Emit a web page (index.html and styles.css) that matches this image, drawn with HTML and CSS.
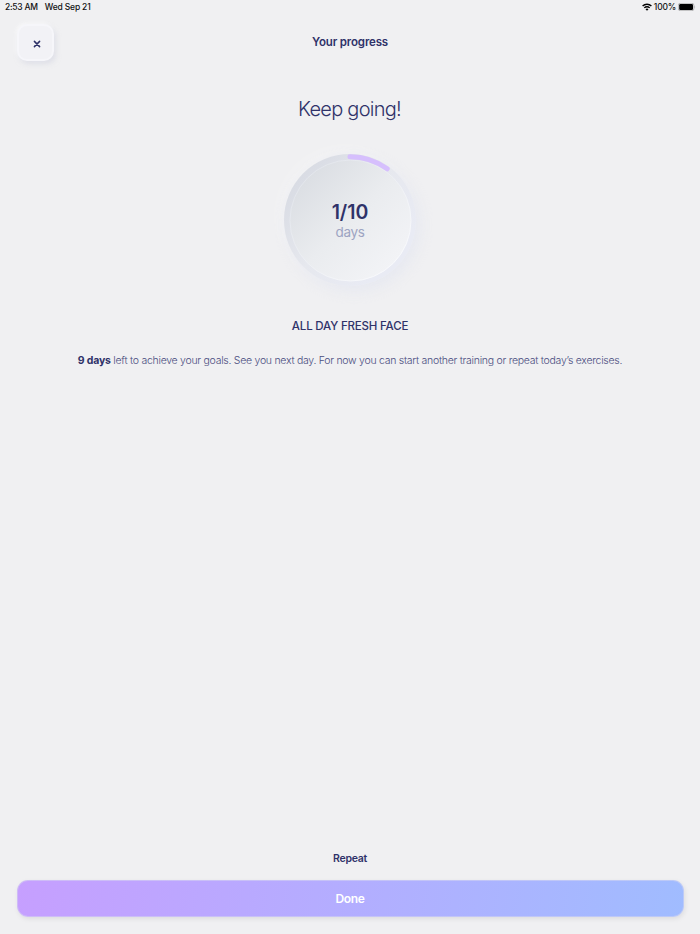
FILE: index.html
```html
<!DOCTYPE html>
<html lang="en">
<head>
    <meta charset="UTF-8">
    <meta name="viewport" content="width=device-width, initial-scale=1.0">
    <title>Your progress</title>
    <link rel="stylesheet" href="styles.css">
</head>
<body>

<div class="status-bar">
    <span class="time">2:53 AM</span>
    <span class="date">Wed Sep 21</span>
    <svg class="wifi" width="10" height="8" viewBox="0 0 10 8">
        <path d="M0.6 3.1 A6.2 6.2 0 0 1 9.4 3.1" fill="none" stroke="#000" stroke-width="1.4"/>
        <path d="M2.3 4.9 A3.8 3.8 0 0 1 7.7 4.9" fill="none" stroke="#000" stroke-width="1.3"/>
        <path d="M5 7.8 L3.5 6.2 A2.2 2.2 0 0 1 6.5 6.2 Z" fill="#000"/>
    </svg>
    <span class="percent">100%</span>
    <svg class="battery" width="18" height="8" viewBox="0 0 18 8">
        <rect x="0.3" y="0.3" width="15.6" height="7.4" rx="2" fill="none" stroke="#000" stroke-opacity="0.4" stroke-width="0.6"/>
        <rect x="1.2" y="1.1" width="13.8" height="5.8" rx="1.2" fill="#000"/>
        <path d="M16.7 2.8 Q17.6 4 16.7 5.2 Z" fill="#000" fill-opacity="0.4"/>
    </svg>
</div>

<header class="header">
    <button class="close-btn" aria-label="Close">
        <svg width="8" height="8" viewBox="0 0 8 8">
            <path d="M1.4 1.4 L6.6 6.6 M6.6 1.4 L1.4 6.6" stroke="#2c2f66" stroke-width="1.5" stroke-linecap="round"/>
        </svg>
    </button>
    <h1 class="title">Your progress</h1>
</header>

<main class="content">
    <h2 class="heading">Keep going!</h2>

    <div class="progress">
        <svg class="ring" width="132" height="132" viewBox="0 0 132 132">
            <defs>
                <linearGradient id="track" x1="0.1" y1="0.2" x2="0.8" y2="0.8">
                    <stop offset="0" stop-color="#d9dce4"/>
                    <stop offset="0.5" stop-color="#e6e8ee"/>
                    <stop offset="1" stop-color="#e9ebf4"/>
                </linearGradient>
                <linearGradient id="disc" x1="0.15" y1="0.15" x2="0.85" y2="0.85">
                    <stop offset="0" stop-color="#dcdfe4"/>
                    <stop offset="0.5" stop-color="#eaecef"/>
                    <stop offset="1" stop-color="#f2f3f6"/>
                </linearGradient>
                <linearGradient id="edge" x1="0.15" y1="0.15" x2="0.85" y2="0.85">
                    <stop offset="0" stop-color="#e3e6ec"/>
                    <stop offset="1" stop-color="#f8f9fc"/>
                </linearGradient>
            </defs>
            <circle cx="66" cy="66" r="66" fill="url(#track)"/>
            <circle cx="66.5" cy="66.5" r="60.5" fill="url(#disc)" stroke="url(#edge)" stroke-width="1"/>
            <path d="M66 2.7 A63.3 63.3 0 0 1 103.2 14.8" fill="none" stroke="#d6bffd" stroke-width="5" stroke-linecap="round"/>
        </svg>
        <div class="progress-text">
            <span class="count">1/10</span>
            <span class="unit">days</span>
        </div>
    </div>

    <h3 class="course">ALL DAY FRESH FACE</h3>
    <p class="message"><b>9 days</b> left to achieve your goals. See you next day. For now you can start another training or repeat today’s exercises.</p>
</main>

<footer class="footer">
    <button class="repeat-btn">Repeat</button>
    <button class="done-btn">Done</button>
</footer>

</body>
</html>
```
FILE: styles.css
```css
* {
    box-sizing: border-box;
}

body {
    display: flex;
    flex-direction: column;
    height: 100vh;
    margin: 0;
    background-color: #f0f0f2;
    color: #2f3269;
    font-family: Inter, "Liberation Sans", sans-serif;
    overflow: hidden;
}

button {
    padding: 0;
    border: none;
    background: none;
    color: inherit;
    font-family: inherit;
    cursor: pointer;
}

h1, h2, h3, p {
    margin: 0;
}

.status-bar {
    display: flex;
    align-items: center;
    height: 14px;
    padding: 0 4px 0 5px;
    color: #111;
    font-size: 8.5px;
    font-weight: 500;
    letter-spacing: -0.2px;
}

.time {
    letter-spacing: -0.25px;
}

.date {
    margin-left: 7px;
    letter-spacing: -0.15px;
}

.wifi {
    margin-left: auto;
}

.percent {
    margin: 0 2px;
}

.header {
    display: grid;
    grid-template-columns: 38px 1fr 38px;
    height: 52px;
    padding: 10px 17px 0;
}

.close-btn {
    display: flex;
    align-items: center;
    justify-content: center;
    width: 37px;
    height: 37px;
    padding: 2px 0 0 2px;
    border: 2px solid #f6f6fa;
    border-radius: 10px;
    background-color: #f2f2f6;
    box-shadow: 2px 3px 5px rgba(205, 207, 222, 0.5), -1px -1px 4px rgba(255, 255, 255, 0.7);
}

.title {
    padding-top: 10px;
    font-size: 11.5px;
    line-height: 16px;
    font-weight: 600;
    letter-spacing: -0.15px;
    text-align: center;
}

.content {
    display: flex;
    flex: 1;
    flex-direction: column;
    align-items: center;
    padding-top: 28px;
}

.heading {
    padding-right: 1px;
    font-size: 20px;
    line-height: 30px;
    font-weight: 300;
    letter-spacing: -0.75px;
}

.progress {
    display: grid;
    width: 132px;
    height: 132px;
    margin-top: 30px;
    border-radius: 50%;
    box-shadow: 4px 5px 14px rgba(220, 223, 240, 0.45), -5px -5px 16px rgba(255, 255, 255, 0.25);
}

.ring,
.progress-text {
    grid-area: 1 / 1;
}

.progress-text {
    display: flex;
    flex-direction: column;
    align-items: center;
    padding-top: 46px;
    z-index: 1;
}

.count {
    font-size: 19.5px;
    line-height: 24px;
    font-weight: 600;
}

.unit {
    color: #9da4c2;
    font-size: 13.5px;
    line-height: 16px;
    letter-spacing: -0.4px;
}

.course {
    margin-top: 32px;
    font-size: 11.5px;
    line-height: 16px;
    font-weight: 500;
    letter-spacing: -0.18px;
}

.message {
    margin-top: 19px;
    color: #4a4d80;
    font-size: 10.5px;
    line-height: 16px;
    font-weight: 300;
    letter-spacing: -0.27px;
    white-space: nowrap;
}

.message b {
    color: #2f3269;
    font-weight: 700;
    letter-spacing: -0.2px;
}

.footer {
    display: flex;
    flex-direction: column;
    align-items: center;
    padding: 0 16.5px 17px;
}

.repeat-btn {
    margin-bottom: 13px;
    font-size: 10.5px;
    line-height: 16px;
    font-weight: 600;
    letter-spacing: -0.25px;
}

.done-btn {
    width: 100%;
    height: 37px;
    border: 1px solid rgba(215, 215, 240, 0.5);
    border-radius: 11px;
    background: linear-gradient(100deg, #c69fff, #a0bcff) border-box;
    box-shadow: 1px 2px 5px rgba(0, 0, 0, 0.08);
    color: #fff;
    font-size: 12px;
    font-weight: 600;
    letter-spacing: -0.3px;
}
```
